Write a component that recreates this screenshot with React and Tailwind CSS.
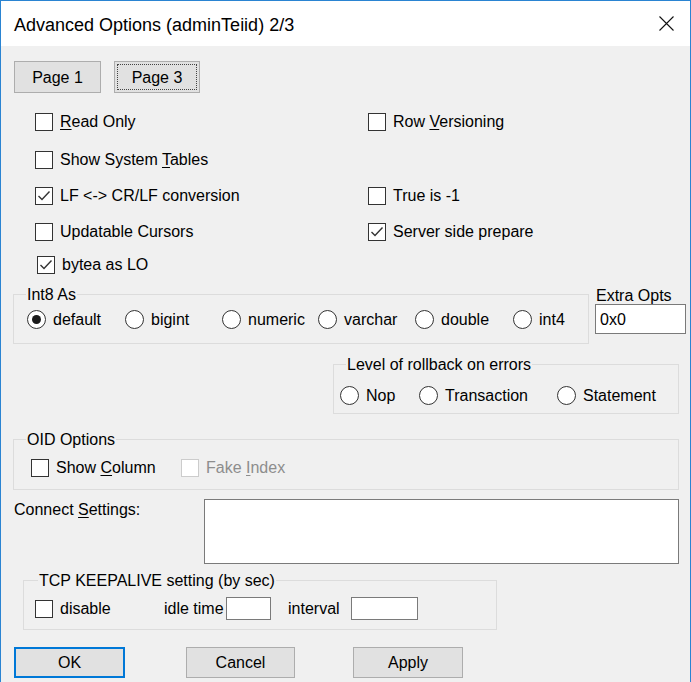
const FONT = { fontFamily: '"Liberation Sans", Arial, sans-serif' };

const Check = ({ checked, disabled, className = "" }) => (
  <span
    className={`w-[18px] h-[18px] shrink-0 bg-white border flex items-center justify-center ${
      disabled ? "border-[#cccccc]" : "border-[#333333]"
    } ${className}`}
  >
    {checked && (
      <svg width="14" height="12" viewBox="0 0 14 12">
        <polyline points="1.5,6 5,9.5 12.5,1.5" fill="none" stroke="#333" strokeWidth="1.4" />
      </svg>
    )}
  </span>
);

const Radio = ({ checked }) => (
  <span className="w-[19px] h-[19px] shrink-0 rounded-full bg-white border border-[#333333] flex items-center justify-center">
    {checked && <span className="w-[9px] h-[9px] rounded-full bg-[#1a1a1a]" />}
  </span>
);

const CheckItem = ({ label, checked, disabled, className = "" }) => (
  <div className={`flex items-center gap-[7px] h-[19px] ${className}`}>
    <Check checked={checked} disabled={disabled} />
    <span className={`leading-[19px] whitespace-nowrap ${disabled ? "text-[#8d8d8d]" : ""}`}>{label}</span>
  </div>
);

const RadioItem = ({ label, checked, className = "" }) => (
  <div className={`flex items-center gap-[7px] h-[19px] shrink-0 ${className}`}>
    <Radio checked={checked} />
    <span className="leading-[19px] whitespace-nowrap">{label}</span>
  </div>
);

const Group = ({ label, className = "", labelClass = "left-[12px]", children }) => (
  <div className={`relative border border-[#dcdcdc] ${className}`}>
    <span className={`absolute -top-[10px] px-[1px] bg-[#f0f0f0] leading-[19px] whitespace-nowrap ${labelClass}`}>
      {label}
    </span>
    {children}
  </div>
);

const Btn = ({ children, focused, dotted, className = "" }) => (
  <button
    className={`h-[31px] bg-[#e1e1e1] flex items-stretch ${
      focused ? "border-2 border-[#0078d7]" : "border border-[#adadad]"
    } ${className}`}
  >
    <span
      className={`flex-1 flex items-center justify-center leading-[19px] ${
        dotted ? "m-[2px] border border-dotted border-[#444]" : ""
      }`}
    >
      {children}
    </span>
  </button>
);

export default function App() {
  return (
    <div
      className="w-[691px] h-[682px] border-x border-t border-[#2a84d2] bg-[#f0f0f0] text-black text-[16px] overflow-hidden flex flex-col"
      style={FONT}
    >
      {/* Title bar */}
      <div className="h-[45px] bg-white flex items-center justify-between pl-[13px] pr-[16px] shrink-0">
        <span className="text-[18px] pt-[3px]">Advanced Options (adminTeiid) 2/3</span>
        <svg width="15" height="15" viewBox="0 0 15 15">
          <path d="M0.5 0.5 L14.5 14.5 M14.5 0.5 L0.5 14.5" stroke="#111" strokeWidth="1.1" />
        </svg>
      </div>

      {/* Page buttons */}
      <div className="flex gap-[13px] mt-[15px] ml-[13px]">
        <Btn className="w-[87px] h-[32px]">Page 1</Btn>
        <Btn className="w-[86px] h-[32px]" dotted>Page 3</Btn>
      </div>

      {/* Checkboxes */}
      <div className="grid grid-cols-[333px_auto] grid-rows-[38px_36px_36px_33px_19px] mt-[19px] ml-[34px]">
        <CheckItem label={<><u className="underline-offset-2">R</u>ead Only</>} />
        <CheckItem label={<>Row <u className="underline-offset-2">V</u>ersioning</>} />
        <CheckItem label={<>Show System <u className="underline-offset-2">T</u>ables</>} />
        <div />
        <CheckItem label="LF <-> CR/LF conversion" checked />
        <CheckItem label="True is -1" />
        <CheckItem label="Updatable Cursors" />
        <CheckItem label="Server side prepare" checked />
        <CheckItem label="bytea as LO" checked className="ml-[2px]" />
        <div />
      </div>

      {/* Int8 As + Extra Opts */}
      <div className="flex mt-[13px] ml-[12px]">
        <Group label="Int8 As" className="w-[576px] h-[50px] mt-[7px] flex pt-[15px] pl-[13px]">
          <RadioItem label="default" checked className="w-[98px]" />
          <RadioItem label="bigint" className="w-[97px]" />
          <RadioItem label="numeric" className="w-[96px]" />
          <RadioItem label="varchar" className="w-[97px]" />
          <RadioItem label="double" className="w-[98px]" />
          <RadioItem label="int4" />
        </Group>
        <div className="ml-[6px] flex flex-col">
          <span className="leading-[17px] ml-[1px] whitespace-nowrap">Extra Opts</span>
          <div className="w-[91px] h-[30px] bg-white border border-[#7a7a7a] pl-[4px] flex items-center leading-[19px]">0x0</div>
        </div>
      </div>

      {/* Level of rollback */}
      <Group label="Level of rollback on errors" className="w-[346px] h-[50px] mt-[20px] ml-[332px] flex pt-[21px] pl-[6px]">
        <RadioItem label="Nop" className="w-[79px]" />
        <RadioItem label="Transaction" className="w-[138px]" />
        <RadioItem label="Statement" />
      </Group>

      {/* OID Options */}
      <Group label="OID Options" className="w-[666px] h-[51px] mt-[25px] ml-[12px] flex pt-[18px] pl-[17px]">
        <CheckItem label={<>Show <u className="underline-offset-2">C</u>olumn</>} className="w-[150px]" />
        <CheckItem label={<>Fake <u className="underline-offset-2">I</u>ndex</>} disabled />
      </Group>

      {/* Connect settings */}
      <div className="flex mt-[9px] ml-[13px]">
        <span className="w-[190px] leading-[19px] pt-[1px]">
          Connect <u className="underline-offset-2">S</u>ettings:
        </span>
        <div className="w-[475px] h-[65px] bg-white border border-[#7a7a7a]" />
      </div>

      {/* TCP keepalive */}
      <Group
        label="TCP KEEPALIVE setting (by sec)"
        labelClass="left-[14px]"
        className="w-[474px] h-[50px] mt-[16px] ml-[22px] flex items-start pt-[16px] pl-[11px]"
      >
        <CheckItem label="disable" className="w-[129px] mt-[2px]" />
        <span className="leading-[19px] mt-[2px] w-[62px] whitespace-nowrap">idle time</span>
        <div className="w-[45px] h-[23px] bg-white border border-[#7a7a7a]" />
        <span className="leading-[19px] mt-[2px] ml-[17px] w-[63px] whitespace-nowrap">interval</span>
        <div className="w-[67px] h-[23px] bg-white border border-[#7a7a7a]" />
      </Group>

      {/* Buttons */}
      <div className="flex mt-[17px] ml-[13px]">
        <Btn focused className="w-[111px]">OK</Btn>
        <Btn className="w-[109px] ml-[61px]">Cancel</Btn>
        <Btn className="w-[110px] ml-[58px]">Apply</Btn>
      </div>
    </div>
  );
}
